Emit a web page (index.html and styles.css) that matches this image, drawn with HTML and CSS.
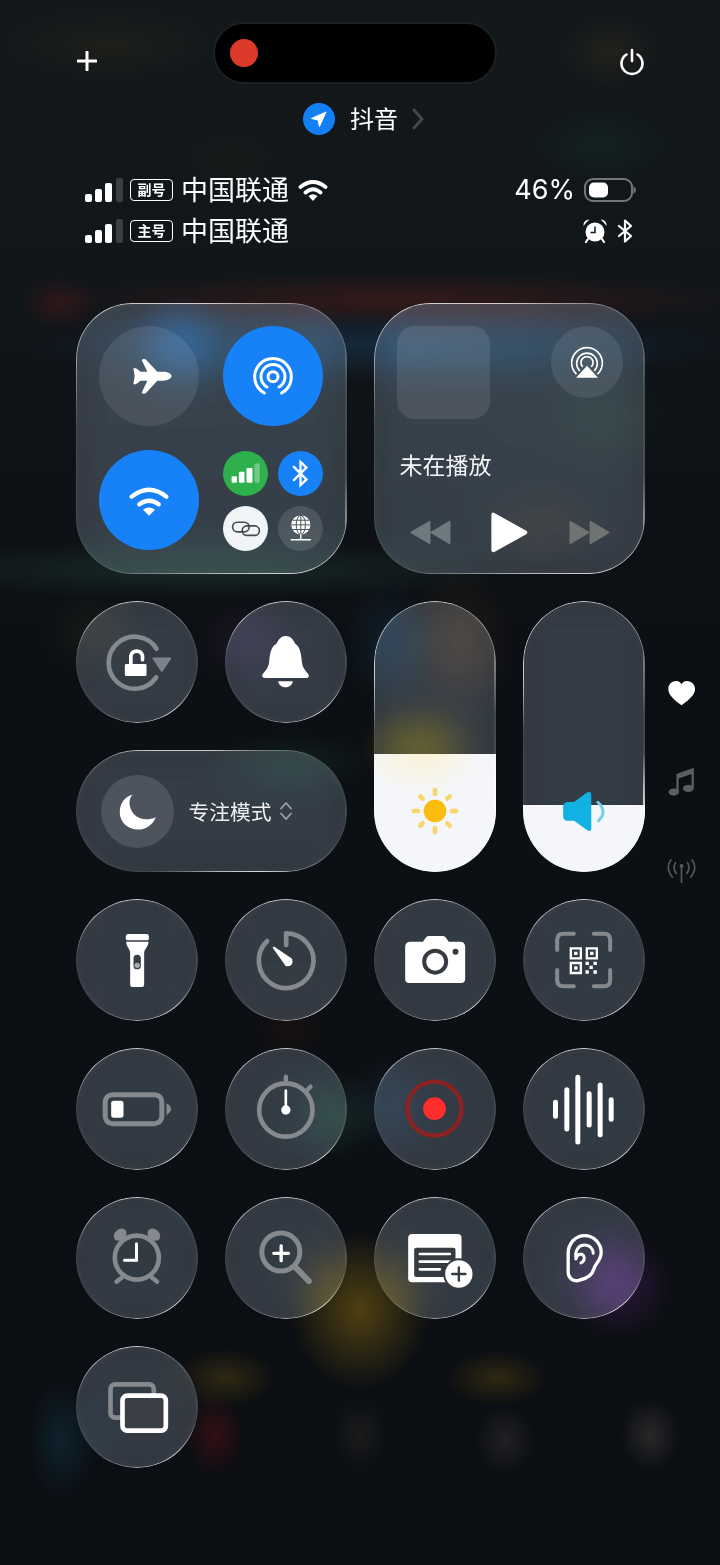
FILE: index.html
```html
<!DOCTYPE html>
<html lang="zh-CN">
<head>
<meta charset="utf-8">
<title>控制中心</title>
<link rel="stylesheet" href="styles.css">
</head>
<body>
<div class="page">
  <header class="topbar">
    <svg class="plus" viewBox="0 0 20 20"><path d="M10 1V19M1 10H19"/></svg>
    <div class="island"><span class="rec-dot"></span></div>
    <svg class="power" viewBox="0 0 28 28"><path d="M8.500 6.500A10.500 10.500 0 1 0 19.500 6.500M14 2V13"/></svg>
  </header>

  <div class="location">
    <span class="loc-dot"><svg viewBox="0 0 32 32"><path d="M23 9L8.500 15.500L15 17L16.500 23.500Z"/></svg></span>
    <span class="loc-name">抖音</span>
    <svg class="chevron" viewBox="0 0 12 22"><path d="M2 2L10 11L2 20"/></svg>
  </div>

  <section class="status">
    <div class="status-row">
      <svg class="signal" viewBox="0 0 38 24"><rect x="0" y="16" width="7" height="8" rx="2"/><rect x="10" y="11" width="7" height="13" rx="2"/><rect x="20" y="5" width="7" height="19" rx="2"/><rect class="off" x="31" y="0" width="7" height="24" rx="2"/></svg>
      <span class="badge">副号</span>
      <span class="carrier">中国联通</span>
      <svg class="wifi-mini" viewBox="0 0 30 22"><path class="arc" d="M2.500 8Q15 -2 27.500 8M7.500 13.500Q15 7 22.500 13.500"/><path d="M10.500 17Q15 13.500 19.500 17L15 22Z"/></svg>
      <span class="percent">46%</span>
      <svg class="battery-mini" viewBox="0 0 52 24"><rect class="shell" x="1" y="1" width="47" height="22" rx="8"/><rect x="5" y="4.500" width="19" height="15" rx="5"/><path class="nub" d="M49.500 8Q52 10 52 12Q52 14 49.500 16Z"/></svg>
    </div>
    <div class="status-row">
      <svg class="signal" viewBox="0 0 38 24"><rect x="0" y="16" width="7" height="8" rx="2"/><rect x="10" y="11" width="7" height="13" rx="2"/><rect x="20" y="5" width="7" height="19" rx="2"/><rect class="off" x="31" y="0" width="7" height="24" rx="2"/></svg>
      <span class="badge">主号</span>
      <span class="carrier">中国联通</span>
      <svg class="alarm-mini" viewBox="0 0 24 24"><circle cx="12" cy="13" r="9.500"/><path class="hand" d="M12 7.500V13.500H7.500"/><path d="M0.500 7Q0 1 6.500 0.500Q3 3.500 0.500 7ZM23.500 7Q24 1 17.500 0.500Q21 3.500 23.500 7Z"/><path class="leg" d="M5 20L3 23M19 20L21 23"/></svg>
      <svg class="bt-mini" viewBox="0 0 16 24"><path d="M2 7L14 17L8 22.500V1.500L14 7L2 17"/></svg>
    </div>
  </section>

  <main class="grid">
    <section class="glass tile tile-conn">
      <div class="round off-state"><svg viewBox="117 110 300 300"><path class="fill" d="M335 260C335 253 322 247 310 247H292L258 211Q255 208 250 209L245 212L262 247H242L228 237H220L224 260L220 285H228L242 274H262L245 310L250 313Q255 314 258 311L292 274H310C322 274 335 267 335 260Z"/></svg></div>
      <div class="round on-state"><svg viewBox="488 110 300 300"><path class="line w9" d="M612 311A55 55 0 1 1 664 311M620 293A36 36 0 1 1 656 293"/><circle class="line w9" cx="638" cy="262" r="15"/></svg></div>
      <div class="round on-state"><svg viewBox="116 482 300 300"><path class="line w13" d="M214 622Q266 580 318 622M237 645Q266 623 295 645"/><path class="fill" d="M248 661Q266 648 284 661L266 679Z"/></svg></div>
      <div class="mini-grid">
        <div class="round green"><svg viewBox="489 482 136 136"><rect class="fill" x="515" y="558" width="16" height="20" rx="3"/><rect class="fill" x="537" y="545" width="17" height="33" rx="3"/><rect class="fill" x="560" y="533" width="18" height="45" rx="3"/><rect class="fill dim" x="584" y="520" width="16" height="58" rx="3"/></svg></div>
        <div class="round on-state"><svg viewBox="654 482 136 136"><path class="line w7 sharp" d="M702 530L740 568L722 585V515L740 532L702 570"/></svg></div>
        <div class="round light"><svg viewBox="489 648 136 136"><rect class="dark-line" x="518" y="697" width="50" height="29" rx="14.500"/><rect class="dark-line" x="547" y="708" width="52" height="29" rx="14.500"/></svg></div>
        <div class="round off-state strong"><svg viewBox="654 648 136 136"><circle class="fill" cx="723" cy="705" r="29"/><path class="globe-lines" d="M694 705H752M698 691H748M698 719H748M723 676V734"/><ellipse class="globe-lines" cx="723" cy="705" rx="14" ry="29"/><path class="line w4 sharp" d="M723 734V750M694 750H752"/></svg></div>
      </div>
    </section>

    <section class="glass tile tile-media">
      <div class="media-top">
        <div class="artwork"></div>
        <div class="round off-state airplay"><svg viewBox="570 107 216 216"><path class="line w5 sharp" d="M645 250A46 46 0 1 1 711 250M655 240A31 31 0 1 1 701 240M664 228A18 18 0 1 1 692 228"/><path class="fill" d="M678 226L711 262H645Z"/></svg></div>
      </div>
      <div class="media-title">未在播放</div>
      <div class="media-controls">
        <svg class="skip" viewBox="148 688 125 74"><path class="skip-back" d="M208 692V758L152 725ZM269 692V758L213 725Z"/></svg>
        <svg class="play" viewBox="396 663 116 128"><path class="play-shape" d="M406 674V780L501 727Z"/></svg>
        <svg class="skip" viewBox="620 688 126 74"><path class="skip-fwd" d="M624 692V758L680 725ZM686 692V758L742 725Z"/></svg>
      </div>
    </section>

    <button class="glass btn first-col">
      <svg viewBox="46.500 33 366 366"><path class="grey w14" d="M287 262A78 78 0 1 1 288 176"/><path class="arrow" d="M278 205H330L304 243Z"/><rect class="fill" x="193" y="222" width="65" height="36" rx="4"/><path class="line w11 sharp" d="M211 224V197A18 18 0 0 1 246 197V209"/></svg>
    </button>
    <button class="glass btn">
      <svg viewBox="493.500 33 366 366"><path class="fill" d="M676 138C690 138 698 148 703 160C718 170 722 190 724 215C726 240 745 248 745 258C745 262 742 264 738 264H614C608 264 605 262 605 258C605 248 624 240 626 215C628 190 632 170 649 160C654 148 662 138 676 138Z"/><path class="fill" d="M653 274H697C695 286 685 292 675 292C665 292 655 286 653 274Z"/></svg>
    </button>

    <div class="glass slider slider-bright">
      <div class="slider-fill" style="height:43.500%"></div>
      <svg class="slider-icon sun" viewBox="149 588 150 150">
        <circle class="sun-core" cx="224" cy="663" r="34"/>
        <path class="sun-rays" d="M224 600V612M224 714V726M161 663H173M275 663H287M180 619L187 626M261 700L268 707M268 619L261 626M187 700L180 707"/>
      </svg>
    </div>
    <div class="glass slider slider-volume">
      <div class="slider-fill" style="height:24.700%"></div>
      <svg class="slider-icon speaker" viewBox="600 600 140 130">
        <path class="speaker-body" d="M607 650Q607 638 620 636H640L680 607Q692 603 692 615V715Q692 728 680 722L640 693H620Q607 692 607 680Z"/>
        <path class="speaker-wave" d="M712 637Q742 665 714 693"/>
      </svg>
    </div>

    <aside class="side">
      <div class="side-item"><svg class="heart" viewBox="920 265 92 85"><path d="M966 345C940 325 926 312 926 295C926 280 938 271 950 271C958 271 963 275 966 281C969 275 974 271 982 271C994 271 1007 280 1007 295C1007 312 992 325 966 345Z"/></svg></div>
      <div class="side-item"><svg class="note" viewBox="920 533 84 94"><path d="M945 557L998 538V601H991V557L952 571V612H945Z"/><ellipse cx="937" cy="612" rx="16" ry="11"/><ellipse cx="981" cy="601" rx="16" ry="11"/></svg></div>
      <div class="side-item"><svg class="antenna" viewBox="916 806 100 80"><circle cx="966" cy="832" r="6"/><path d="M966 836V882M948 822Q938 838 950 855M984 822Q994 838 982 855M934 814Q916 838 938 866M998 814Q1016 838 994 866"/></svg></div>
    </aside>

    <div class="glass pill">
      <div class="round moon-wrap"><svg viewBox="121 554 218 218"><path class="fill" d="M215 612C190 620 177 640 177 665C177 695 202 717 232 717C255 717 275 703 285 680C275 684 266 686 256 686C228 686 206 664 206 636C206 628 209 620 215 612Z"/></svg></div>
      <span class="pill-label">专注模式</span>
      <svg class="updown" viewBox="0 0 14 20"><path d="M2 7.500L7 2L12 7.500M2 12.500L7 18L12 12.500"/></svg>
    </div>

    <button class="glass btn first-col">
      <svg viewBox="46.500 27 366 366"><path class="fill" d="M203 132H258Q265 132 265 139V147Q265 151 260 151H201Q196 151 196 147V139Q196 132 203 132Z"/><path class="fill" d="M197 155H264C264 170 251 176 251 190V284Q251 291 244 291H216Q209 291 209 284V190C209 176 197 170 197 155Z"/><rect class="hole" x="219" y="194" width="22" height="44" rx="11"/><circle class="hole-dot" cx="230" cy="226" r="8"/></svg>
    </button>
    <button class="glass btn">
      <svg viewBox="493.500 27 366 366"><path class="grey w14" d="M677 165V130A82 82 0 1 1 620 153"/><path class="fill round-join" d="M640 173L692 208Q698 226 678 226Z"/></svg>
    </button>
    <button class="glass btn">
      <svg viewBox="40.500 27 366 366"><path class="fill" d="M150 155H187L197 142Q200 138 206 138H246Q252 138 255 142L265 155H298Q314 155 314 171V266Q314 279 301 279H147Q134 279 134 266V171Q134 155 150 155Z"/><circle class="cam-lens" cx="224" cy="215" r="33"/><circle class="cam-dot" cx="285" cy="185" r="9"/></svg>
    </button>
    <button class="glass btn">
      <svg viewBox="487.500 27 366 366"><path class="grey w12" d="M590 180V150Q590 131 609 131H640M700 131H730Q749 131 749 150V180M590 240V270Q590 289 609 289H640M700 289H730Q749 289 749 270V240"/><path class="qr" d="M631 175H661V205H631ZM679 175H709V205H679ZM631 219H661V249H631Z"/><path class="fill" d="M641 185H651V195H641ZM689 185H699V195H689ZM641 229H651V239H641ZM675 215H685V225H675ZM699 215H709V225H699ZM687 227H697V237H687ZM675 241H685V251H675ZM699 241H709V251H699Z"/></svg>
    </button>

    <button class="glass btn first-col">
      <svg viewBox="46.500 474 366 366"><rect class="grey w15" x="134" y="614" width="170" height="87" rx="22"/><rect class="fill" x="152" y="632" width="37" height="51" rx="8"/><path class="grey-fill" d="M318 640Q332 648 332 657Q332 666 318 675Z"/></svg>
    </button>
    <button class="glass btn">
      <svg viewBox="493.500 474 366 366"><circle class="grey w14" cx="676" cy="660" r="80"/><path class="grey w13" d="M676 560V580M738 602L750 590"/><path class="line w8" d="M676 602V660"/><circle class="fill" cx="676" cy="660" r="14"/></svg>
    </button>
    <button class="glass btn">
      <svg viewBox="40.500 474 366 366"><circle class="rec-ring" cx="222" cy="656" r="81"/><circle class="rec-core" cx="222" cy="656" r="34"/></svg>
    </button>
    <button class="glass btn">
      <svg viewBox="487.500 474 366 366"><path class="line w15" d="M585 637V679M619 599V717M652 562V756M686 611V705M719 585V734M752 629V688"/></svg>
    </button>

    <button class="glass btn first-col">
      <svg viewBox="46.500 36 366 366"><circle class="grey w14" cx="229" cy="218" r="66"/><ellipse class="grey-fill tilt-left" cx="179" cy="149" rx="21" ry="16"/><ellipse class="grey-fill tilt-right" cx="280" cy="149" rx="21" ry="16"/><path class="grey w13" d="M185 277L168 290M273 277L290 290"/><path class="line w9 sharp" d="M228 176V226H192"/></svg>
    </button>
    <button class="glass btn">
      <svg viewBox="493.500 36 366 366"><circle class="grey w15" cx="661" cy="201" r="57"/><path class="grey w18" d="M705 247L745 288"/><path class="line w10" d="M640 205H684M662 183V227"/></svg>
    </button>
    <button class="glass btn">
      <svg viewBox="40.500 36 366 366"><path class="fill" d="M155 147H291Q303 147 303 159V280Q303 292 291 292H155Q143 292 143 280V159Q143 147 155 147Z"/><rect class="panel" x="161" y="188" width="124" height="88" rx="6"/><path class="line w8" d="M178 207H268M178 230H268M178 253H238"/><circle class="plus-rim" cx="295" cy="267" r="47"/><circle class="fill" cx="295" cy="267" r="41"/><path class="plus-mark" d="M275 267H315M295 247V287"/></svg>
    </button>
    <button class="glass btn">
      <svg viewBox="487.500 36 366 366"><path class="line w10" d="M658 285C640 292 623 280 623 262V205C623 175 645 152 672 152C700 152 722 175 722 203C722 225 705 235 700 252C695 272 680 280 658 285Z"/><path class="line w9" d="M646 220C643 195 655 180 672 180C688 180 698 192 698 205M646 222C650 208 662 203 669 212C675 220 670 230 661 234"/></svg>
    </button>

    <button class="glass btn first-col">
      <svg viewBox="46.500 483 366 366"><rect class="grey w14" x="150" y="598" width="130" height="100" rx="14"/><rect class="window-front" x="186" y="632" width="130" height="105" rx="14"/></svg>
    </button>
  </main>
</div>
</body>
</html>
```
FILE: styles.css
```css
* { box-sizing: border-box; }

html, body {
  margin: 0;
  width: 720px;
  height: 1565px;
  overflow: hidden;
}

body {
  font-family: "Noto Sans CJK SC", "Noto Sans", sans-serif;
  color: #fff;
  background-color: #0b0e12;
  background-image:
    radial-gradient(ellipse 110px 36px at 110px 45px, rgba(70, 62, 22, .2), transparent),
    radial-gradient(ellipse 50px 36px at 610px 52px, rgba(80, 68, 24, .24), transparent),
    radial-gradient(ellipse 75px 40px at 600px 145px, rgba(24, 62, 50, .26), transparent),
    radial-gradient(ellipse 60px 36px at 230px 160px, rgba(50, 48, 20, .15), transparent),
    radial-gradient(ellipse 360px 28px at 400px 300px, rgba(100, 32, 26, .42), transparent),
    radial-gradient(ellipse 40px 28px at 60px 303px, rgba(100, 28, 28, .36), transparent),
    radial-gradient(ellipse 360px 36px at 380px 345px, rgba(26, 66, 100, .46), transparent),
    radial-gradient(ellipse 50px 50px at 180px 345px, rgba(34, 100, 170, .38), transparent),
    radial-gradient(ellipse 330px 30px at 200px 570px, rgba(36, 66, 56, .5), transparent),
    radial-gradient(ellipse 70px 50px at 600px 420px, rgba(30, 60, 40, .2), transparent),
    radial-gradient(ellipse 70px 40px at 540px 525px, rgba(60, 50, 30, .22), transparent),
    radial-gradient(ellipse 45px 65px at 385px 640px, rgba(26, 70, 100, .26), transparent),
    radial-gradient(ellipse 55px 75px at 460px 640px, rgba(90, 60, 30, .28), transparent),
    radial-gradient(ellipse 60px 42px at 420px 748px, rgba(130, 110, 10, .42), transparent),
    radial-gradient(ellipse 50px 45px at 90px 630px, rgba(70, 66, 40, .2), transparent),
    radial-gradient(ellipse 50px 45px at 245px 640px, rgba(70, 50, 90, .24), transparent),
    radial-gradient(ellipse 85px 30px at 290px 762px, rgba(30, 70, 56, .32), transparent),
    radial-gradient(ellipse 40px 26px at 290px 1030px, rgba(70, 24, 14, .22), transparent),
    radial-gradient(ellipse 44px 46px at 336px 1115px, rgba(40, 90, 70, .32), transparent),
    radial-gradient(ellipse 40px 50px at 385px 1105px, rgba(40, 80, 110, .22), transparent),
    radial-gradient(ellipse 70px 80px at 360px 1310px, rgba(125, 98, 18, .6), transparent),
    radial-gradient(ellipse 56px 56px at 618px 1285px, rgba(100, 40, 130, .36), transparent),
    radial-gradient(ellipse 52px 30px at 225px 1378px, rgba(96, 76, 16, .42), transparent),
    radial-gradient(ellipse 52px 28px at 497px 1378px, rgba(96, 76, 16, .42), transparent),
    radial-gradient(ellipse 30px 42px at 215px 1435px, rgba(100, 16, 22, .44), transparent),
    radial-gradient(ellipse 30px 38px at 360px 1435px, rgba(60, 56, 50, .3), transparent),
    radial-gradient(ellipse 30px 36px at 505px 1440px, rgba(70, 64, 64, .36), transparent),
    radial-gradient(ellipse 30px 36px at 650px 1435px, rgba(80, 74, 70, .44), transparent),
    radial-gradient(ellipse 36px 62px at 62px 1440px, rgba(16, 60, 80, .42), transparent),
    linear-gradient(180deg, #13181b 0, #11161a 250px, #0c0f13 620px, #0b0e12 100%);
}

.page { padding-top: 22px; }

/* top bar */
.topbar {
  display: grid;
  grid-template-columns: 136px 284px 1fr;
  align-items: start;
  padding: 0 74px 0 77px;
}

.plus { width: 20px; height: 20px; margin-top: 29px; }
.plus path { fill: none; stroke: #fff; stroke-width: 3; stroke-linecap: round; }

.island {
  height: 62px;
  background: #000;
  border: 2px solid #1c1f23;
  border-radius: 31px;
  display: flex;
  align-items: center;
  padding-left: 15px;
}

.rec-dot {
  width: 28px;
  height: 28px;
  border-radius: 50%;
  background: #dd3a2c;
}

.power { justify-self: end; width: 28px; height: 28px; margin-top: 26px; }
.power path { fill: none; stroke: #fff; stroke-width: 2.600; stroke-linecap: round; }

/* location */
.location {
  display: flex;
  align-items: center;
  height: 32px;
  margin-top: 19px;
  padding-left: 303px;
}

.loc-dot {
  width: 32px;
  height: 32px;
  border-radius: 50%;
  background: #127ff5;
  margin-right: 15px;
}
.loc-dot svg { display: block; width: 32px; height: 32px; }
.loc-dot path { fill: #fff; stroke: #fff; stroke-width: 1; stroke-linejoin: round; }

.loc-name { font-size: 24px; line-height: 30px; padding-bottom: 2px; width: 47px; white-space: nowrap; }

.chevron { width: 12px; height: 22px; margin-left: 15px; }
.chevron path { fill: none; stroke: #45484b; stroke-width: 3; stroke-linecap: round; stroke-linejoin: round; }

/* status */
.status {
  display: flex;
  flex-direction: column;
  gap: 9px;
  margin-top: 39px;
  padding: 0 84px 0 85px;
}

.status-row {
  display: flex;
  align-items: center;
  height: 32px;
}

.signal { width: 38px; height: 24px; margin-right: 7px; }
.signal rect { fill: #fff; }
.signal .off { fill: #3a3d41; }

.badge {
  width: 43px;
  height: 22px;
  border: 1.500px solid #fff;
  border-radius: 4px;
  font-size: 14px;
  line-height: 19px;
  font-weight: 700;
  text-align: center;
  margin-right: 8px;
  white-space: nowrap;
}

.carrier { font-size: 27px; line-height: 30px; padding-bottom: 2px; white-space: nowrap; width: 108px; }

.wifi-mini { width: 30px; height: 22px; margin-left: 9px; }
.wifi-mini path { fill: #fff; }
.wifi-mini .arc { fill: none; stroke: #fff; stroke-width: 3.800; stroke-linecap: round; }

.percent {
  margin-left: auto;
  font-family: Inter, "Liberation Sans", sans-serif;
  font-size: 27px;
  line-height: 32px;
}

.battery-mini { width: 52px; height: 24px; margin-left: 9px; }
.battery-mini rect { fill: #fff; }
.battery-mini .shell { fill: none; stroke: #737578; stroke-width: 2; }
.battery-mini .nub { fill: #737578; }

.alarm-mini { width: 24px; height: 24px; margin-left: auto; margin-right: 10px; }
.alarm-mini path, .alarm-mini circle { fill: #fff; }
.alarm-mini .hand { fill: none; stroke: #15191c; stroke-width: 1.500; }
.alarm-mini .leg { fill: none; stroke: #fff; stroke-width: 2.200; stroke-linecap: round; }

.bt-mini { width: 16px; height: 24px; margin-right: 3px; }
.bt-mini path { fill: none; stroke: #fff; stroke-width: 2.200; stroke-linejoin: round; stroke-linecap: round; }

/* main grid */
.grid {
  display: grid;
  grid-template-columns: repeat(4, 122px) 20px;
  grid-template-rows: 271px repeat(5, 122px);
  gap: 27px;
  margin-top: 56px;
  padding-left: 75.500px;
}

.glass {
  position: relative;
  background: rgba(115, 120, 126, .33);
  -webkit-backdrop-filter: blur(16px) brightness(2) saturate(1.500);
  backdrop-filter: blur(16px) brightness(2) saturate(1.500);
  box-shadow: inset 0 0 12px rgba(255, 255, 255, .06);
  border: 0;
  padding: 0;
  color: #fff;
}

.glass::before {
  content: "";
  position: absolute;
  inset: 0;
  border-radius: inherit;
  padding: 1.200px;
  background: conic-gradient(rgba(255, 255, 255, .72) 0deg, rgba(255, 255, 255, .36) 35deg, rgba(255, 255, 255, .06) 70deg, rgba(255, 255, 255, .08) 105deg, rgba(255, 255, 255, .8) 140deg, rgba(255, 255, 255, .62) 175deg, rgba(255, 255, 255, .08) 225deg, rgba(255, 255, 255, .06) 275deg, rgba(255, 255, 255, .72) 315deg, rgba(255, 255, 255, .72) 360deg);
  -webkit-mask: linear-gradient(#000 0 0) content-box, linear-gradient(#000 0 0);
  -webkit-mask-composite: xor;
  mask: linear-gradient(#000 0 0) content-box, linear-gradient(#000 0 0);
  mask-composite: exclude;
  pointer-events: none;
  z-index: 2;
}

.btn { border-radius: 50%; width: 122px; height: 122px; display: block; }
.btn svg { display: block; width: 122px; height: 122px; }
.first-col { grid-column: 1; }

.round { border-radius: 50%; overflow: hidden; }
.round svg { display: block; width: 100%; height: 100%; }

.tile { border-radius: 56px; }

.tile-conn {
  grid-column: 1 / 3;
  grid-row: 1;
  display: grid;
  grid-template-columns: 100px 100px;
  grid-template-rows: 100px 100px;
  gap: 24px;
  padding: 23px;
}

.off-state { background: rgba(255, 255, 255, .09); }
.off-state.strong { background: rgba(255, 255, 255, .12); }
.on-state { background: #1782f7; }
.green { background: #2eb04d; }
.light { background: #f2f5f8; }

.mini-grid {
  display: grid;
  grid-template-columns: 45px 45px;
  grid-template-rows: 45px 45px;
  gap: 10px;
  padding-top: 1px;
}

.tile-media {
  grid-column: 3 / 5;
  grid-row: 1;
  padding: 23px 22px 0 23px;
}

.media-top { display: flex; justify-content: space-between; align-items: flex-start; }

.artwork {
  width: 93px;
  height: 93px;
  border-radius: 18px;
  background: rgba(255, 255, 255, .1);
}

.airplay { width: 72px; height: 72px; }

.media-title {
  font-size: 23px;
  line-height: 32px;
  margin-top: 29px;
  padding-left: 3px;
  white-space: nowrap;
  color: #f4f5f6;
}

.media-controls {
  display: flex;
  justify-content: space-between;
  align-items: center;
  height: 44px;
  margin-top: 30px;
  padding: 0 13px;
}

.skip { width: 41px; height: 25px; }
.skip-back { fill: #6d7a80; stroke: #6d7a80; stroke-width: 5; stroke-linejoin: round; }
.skip-fwd { fill: #6f7372; stroke: #6f7372; stroke-width: 5; stroke-linejoin: round; }
.play { width: 39px; height: 43px; }
.play-shape { fill: #fff; stroke: #fff; stroke-width: 12; stroke-linejoin: round; }

.slider {
  grid-row: 2 / 4;
  border-radius: 61px;
  overflow: hidden;
  display: flex;
  flex-direction: column;
  justify-content: flex-end;
}
.slider-bright { grid-column: 3; }
.slider-volume { grid-column: 4; }
.slider-fill { background: #f4f6f9; width: 100%; }
.slider-bright .slider-fill {
  background: radial-gradient(ellipse 60px 40px at 40% 0, rgba(255, 240, 195, .65), transparent), #f4f6f9;
}

.slider-icon { position: absolute; left: 50%; transform: translateX(-50%); }
.sun { width: 50px; height: 50px; bottom: 36px; }
.sun-core { fill: #fcbc0e; }
.sun-rays { fill: none; stroke: #f8d66c; stroke-width: 14; stroke-linecap: round; }
.speaker { width: 47px; height: 43px; bottom: 39px; }
.speaker-body { fill: #12b1e3; }
.speaker-wave { fill: none; stroke: #6fd0e8; stroke-width: 9; stroke-linecap: round; }

.side {
  grid-column: 5;
  grid-row: 2 / 4;
  display: flex;
  flex-direction: column;
  align-items: center;
  padding-top: 47px;
}
.side-item {
  flex: none;
  height: 89px;
  display: flex;
  align-items: center;
  justify-content: center;
}
.heart { flex: none; width: 31px; height: 28px; }
.heart path { fill: #fff; }
.note { flex: none; width: 28px; height: 31px; }
.note path, .note ellipse { fill: #5b5e61; }
.antenna { flex: none; width: 33px; height: 27px; }
.antenna circle { fill: #55585b; }
.antenna path { fill: none; stroke: #55585b; stroke-width: 5; stroke-linecap: round; }

.pill {
  grid-column: 1 / 3;
  grid-row: 3;
  border-radius: 61px;
  display: flex;
  align-items: center;
  padding-left: 25px;
}
.moon-wrap { width: 73px; height: 73px; background: rgba(255, 255, 255, .13); margin-right: 15px; }
.pill-label { font-size: 20.750px; line-height: 30px; white-space: nowrap; color: #f0f1f2; }
.updown { width: 14px; height: 20px; margin-left: 7px; }
.updown path { fill: none; stroke: #9ea1a5; stroke-width: 1.800; stroke-linecap: round; stroke-linejoin: round; }

/* icon paint */
.fill { fill: #fff; }
.fill.dim { fill: rgba(255, 255, 255, .32); }
.round-join { stroke: #fff; stroke-width: 6; stroke-linejoin: round; }

.line { fill: none; stroke: #fff; stroke-linecap: round; stroke-linejoin: round; }
.grey { fill: none; stroke: #868a8f; stroke-linecap: round; stroke-linejoin: round; }
.grey-fill { fill: #868a8f; }
.tilt-left { transform: rotate(-40deg); transform-box: fill-box; transform-origin: center; }
.tilt-right { transform: rotate(40deg); transform-box: fill-box; transform-origin: center; }
.sharp { stroke-linejoin: miter; }
.w4 { stroke-width: 4; }
.w5 { stroke-width: 5; }
.w7 { stroke-width: 7; }
.w8 { stroke-width: 8; }
.w9 { stroke-width: 9; }
.w10 { stroke-width: 10; }
.w11 { stroke-width: 11; }
.w12 { stroke-width: 12; }
.w13 { stroke-width: 13; }
.w14 { stroke-width: 14; }
.w15 { stroke-width: 15; }
.w18 { stroke-width: 18; }

.arrow { fill: #7d838b; stroke: #7d838b; stroke-width: 5; stroke-linejoin: round; }
.dark-line { fill: none; stroke: #454a50; stroke-width: 5; }
.globe-lines { fill: none; stroke: #4c5158; stroke-width: 3; }
.hole { fill: #3a3e44; }
.hole-dot { fill: #a9acaf; }
.cam-lens { fill: none; stroke: #363a41; stroke-width: 12; }
.cam-dot { fill: #363a41; }
.qr { fill: none; stroke: #fff; stroke-width: 7; }
.rec-ring { fill: none; stroke: #8e2222; stroke-width: 13; }
.rec-core { fill: #ff2d2b; }
.panel { fill: #363a41; }
.plus-rim { fill: #363a41; }
.plus-mark { fill: none; stroke: #363a41; stroke-width: 7; stroke-linecap: round; }
.window-front { fill: #3a3e45; stroke: #fff; stroke-width: 14; }
```
